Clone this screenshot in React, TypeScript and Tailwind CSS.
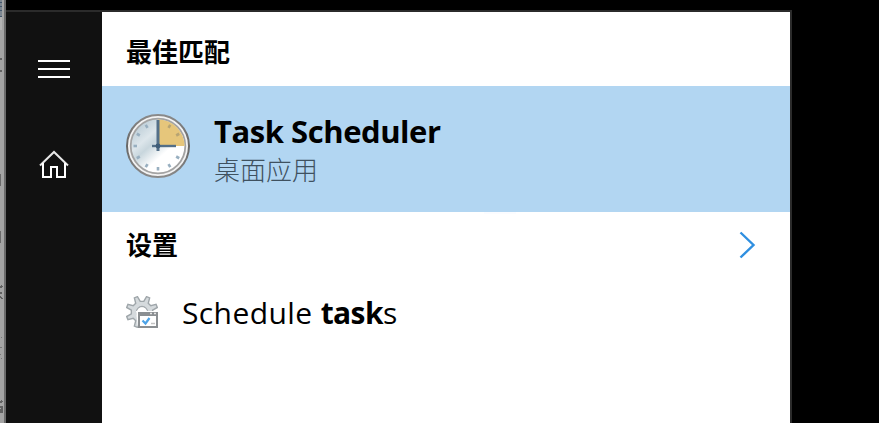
function BackgroundEdge() {
  return (
    <svg width="6" height="423" shapeRendering="crispEdges" className="shrink-0">
      <rect width="6" height="423" fill="#a4a4a4" />
      <rect width="2" height="16" fill="#7d8791" />
      <path d="M0 2.5h2M0 6.5h2M0 10.5h2M0 16h2" stroke="#43566b" />
      <rect y="17" width="2" height="13" fill="#b4b4b4" />
      <path d="M0 59h2M0 71h2" stroke="#626262" strokeWidth="2" />
      <path d="M.5 174v12M.5 231v12" stroke="#6a6a6a" />
      <path d="M0 288l2 -2M0 293h2M0 296l2 3M0 403l2 -2M0 407h2v6M0 409v4" stroke="#606060" strokeWidth="1.5" fill="none" />
      <path d="M1 337h1M0 347h2M0 354h1M1 358h1" stroke="#777" />
      <rect x="4" width="2" height="423" fill="#6b6b6b" />
    </svg>
  );
}

function MenuIcon() {
  return (
    <svg width="32" height="18" shapeRendering="crispEdges">
      <path d="M0 1h32M0 9h32M0 17h32" stroke="#fff" strokeWidth="2" />
    </svg>
  );
}

function HomeIcon() {
  return (
    <svg width="32" height="30" fill="none" stroke="#fff" strokeWidth="2">
      <path d="M2 15.5L16 2l14 13.5" strokeOpacity="0.9" />
      <path d="M5 13v14h8V17h6v10h8V13" />
    </svg>
  );
}

const ticks = [30, 60, 120, 150, 180, 210, 240, 270, 300, 330];

function ClockIcon() {
  return (
    <svg width="64" height="64" viewBox="0 0 64 64" className="shrink-0">
      <defs>
        <linearGradient id="face" x1="0.1" y1="0.1" x2="0.8" y2="0.9">
          <stop offset="0" stopColor="#b9cbd5" />
          <stop offset="0.3" stopColor="#dde6eb" />
          <stop offset="0.44" stopColor="#c8d6dd" />
          <stop offset="0.7" stopColor="#ffffff" />
        </linearGradient>
        <linearGradient id="rim" x1="0" y1="0" x2="0" y2="1">
          <stop offset="0" stopColor="#8a8a8a" />
          <stop offset="0.5" stopColor="#666" />
          <stop offset="1" stopColor="#8a8a8a" />
        </linearGradient>
      </defs>
      <circle cx="32" cy="32" r="31" fill="#f3f3f3" stroke="url(#rim)" strokeWidth="2" />
      <circle cx="32" cy="32" r="27.3" fill="url(#face)" stroke="#a3a3a3" strokeWidth="1.8" />
      <path d="M32 32V5.5A26.5 26.5 0 0 1 58.5 32Z" fill="#e6c67b" />
      {ticks.map((a) => (
        <path key={a} d="M32 7.5v3.5" transform={`rotate(${a} 32 32)`} stroke={a < 90 ? "#b7a473" : "#98afc0"} strokeWidth="2.6" />
      ))}
      <path d="M32 6v31" stroke="#536f88" strokeWidth="3" />
      <path d="M26 32h24" stroke="#536f88" strokeWidth="2.4" />
      <circle cx="32" cy="32" r="2.4" fill="#3f5d78" />
    </svg>
  );
}

const teeth = [22.5, 67.5, 112.5, 157.5, 202.5, 247.5, 292.5, 337.5];

const gearPoints = teeth
  .flatMap((a) =>
    [[-13, 10.8], [-6, 16], [6, 16], [13, 10.8]].map(([offset, radius]) => {
      const t = ((a + offset) * Math.PI) / 180;
      return `${(16 + radius * Math.sin(t)).toFixed(2)},${(16 - radius * Math.cos(t)).toFixed(2)}`;
    }),
  )
  .join(" ");

function TaskSettingsIcon() {
  return (
    <svg width="32" height="32" viewBox="0 0 32 32" className="shrink-0">
      <polygon points={gearPoints} fill="#d5dadd" stroke="#9fa6aa" strokeWidth="1.4" />
      <circle cx="16" cy="16" r="5.5" fill="#fff" stroke="#a3a9ad" strokeWidth="1.3" />
      <path d="M10 15h22v17H12Z" fill="#fff" />
      <path d="M11 16.5a5 5 0 0 1 10 0" fill="#fff" />
      <path d="M13 17h18v14H13Z" fill="#fff" stroke="#8b8f92" strokeWidth="2" />
      <path d="M12 18h20" stroke="#8b8f92" strokeWidth="4" />
      <path d="M24 17.5h2M28 17.5h2" stroke="#e5e5e5" strokeWidth="1.5" />
      <path d="M16.5 24.5l3 3 4-5.5" fill="none" stroke="#4ca3e8" strokeWidth="2.2" />
      <path d="M25 27.5h4" stroke="#c4c4c4" strokeWidth="1.5" />
    </svg>
  );
}

export default function App() {
  return (
    <div className="flex h-[423px] w-[879px] overflow-hidden bg-black font-['Open_Sans','Noto_Sans_CJK_SC',sans-serif] text-black">
      <BackgroundEdge />
      <div className="mt-[10px] flex w-[786px] border-t-2 border-r-2 border-[#2b2b2b]">
        <nav className="flex w-24 shrink-0 flex-col items-center bg-[#111111] pt-12">
          <MenuIcon />
          <div className="mt-[72px]"><HomeIcon /></div>
        </nav>
        <main className="flex flex-1 flex-col bg-white">
          <h2 className="flex h-[74px] items-center pt-[6px] pl-6 text-[26px] leading-none font-bold">最佳匹配</h2>
          <section className="flex h-[126px] shrink-0 bg-[#b2d6f2] pt-7 pl-6">
            <ClockIcon />
            <div className="-mt-px ml-6 whitespace-nowrap">
              <div className="h-9 text-[31px] leading-9 font-bold tracking-[-0.45px]">Task Scheduler</div>
              <div className="mt-[6px] text-[26px] leading-[30px] font-light text-[#3f515f]">桌面应用</div>
            </div>
          </section>
          <div className="ml-[382px] h-[2px] w-8 bg-[#fbfcff]" />
          <div className="flex h-[62px] items-center justify-between pr-[34px] pl-6">
            <h2 className="text-[26px] leading-none font-bold">设置</h2>
            <svg width="17" height="28" fill="none" stroke="#2f8fe0" strokeWidth="2.4">
              <path d="M1.5 1.5L14.5 14L1.5 26.5" />
            </svg>
          </div>
          <div className="mt-5 flex pl-6">
            <TaskSettingsIcon />
            <div className="-mt-px ml-6 text-[30px] leading-9 tracking-[0.4px] whitespace-nowrap">
              Schedule <b className="tracking-[-0.6px]">task</b>s
            </div>
          </div>
        </main>
      </div>
    </div>
  );
}
